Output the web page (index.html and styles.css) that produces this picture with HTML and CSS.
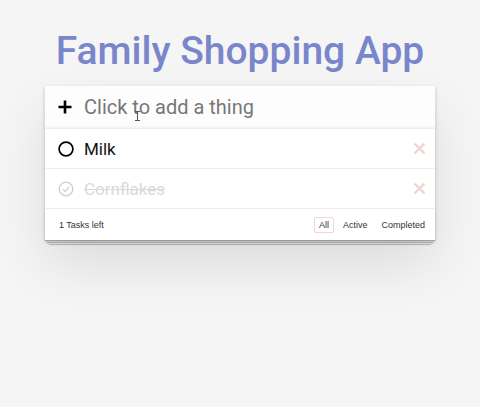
FILE: index.html
```html
<!DOCTYPE html>
<html>
<head>
<meta charset="utf-8">
<link rel="stylesheet" href="styles.css">
</head>
<body>
<h1 class="title">Family Shopping App</h1>
<section class="card">
  <div class="new-row">
    <svg class="plus" width="14" height="14" viewBox="0 0 14 14"><path d="M7 0.5V13.5M0.5 7H13.5" stroke="#000" stroke-width="2.6"/></svg>
    <span class="placeholder">Click to add a thing</span>
    <svg class="cursor" width="7" height="10" viewBox="0 0 7 10"><path d="M1 0.5H3.5M3.5 0.5H6M3.5 0.5V9.5M1 9.5H6" stroke="#555" stroke-width="1" fill="none"/></svg>
  </div>
  <ul class="list">
    <li class="item">
      <svg class="toggle" width="16" height="16" viewBox="0 0 16 16"><circle cx="8" cy="8" r="6.9" fill="none" stroke="#000" stroke-width="1.7"/></svg>
      <span class="label">Milk</span>
      <svg class="destroy" width="13" height="13" viewBox="0 0 13 13"><path d="M1.5 1.5L11.5 11.5M11.5 1.5L1.5 11.5" stroke="#efd3d3" stroke-width="2.4"/></svg>
    </li>
    <li class="item done">
      <svg class="toggle" width="16" height="16" viewBox="0 0 16 16"><circle cx="8" cy="8" r="6.8" fill="none" stroke="#cfcfcf" stroke-width="1.3"/><path d="M4.8 8.2L7.1 10.4L11.2 5.9" fill="none" stroke="#cfcfcf" stroke-width="1.3"/></svg>
      <span class="label">Cornflakes</span>
      <svg class="destroy" width="13" height="13" viewBox="0 0 13 13"><path d="M1.5 1.5L11.5 11.5M11.5 1.5L1.5 11.5" stroke="#efd3d3" stroke-width="2.4"/></svg>
    </li>
  </ul>
  <footer class="footer">
    <span class="count">1 Tasks left</span>
    <ul class="filters">
      <li><a class="filter selected">All</a></li>
      <li><a class="filter">Active</a></li>
      <li><a class="filter">Completed</a></li>
    </ul>
  </footer>
</section>
</body>
</html>
```
FILE: styles.css
```css
html, body {
  margin: 0;
  padding: 0;
}
body {
  background: #f5f5f5;
  font-family: Roboto, "Liberation Sans", sans-serif;
  width: 480px;
  height: 407px;
  overflow: hidden;
}
.title {
  margin: 28px 0 0;
  height: 58px;
  line-height: 46px;
  font-size: 39px;
  font-weight: 500;
  color: #7986cb;
  text-align: center;
}
.card {
  position: relative;
  width: 390px;
  margin: 0 auto;
  background: #fff;
  box-shadow: 0 2px 4px 0 rgba(0,0,0,0.2), 0 25px 50px 0 rgba(0,0,0,0.1);
}
.new-row {
  position: relative;
  display: flex;
  align-items: center;
  height: 42px;
  padding-left: 13px;
  background: rgba(0,0,0,0.006);
  box-shadow: inset 0 -2px 1px rgba(0,0,0,0.03);
  border-bottom: 1px solid #ededed;
}
.plus {
  flex: none;
  margin-right: 12px;
}
.placeholder {
  font-size: 20px;
  color: #777;
}
.cursor {
  position: absolute;
  left: 89px;
  top: 25px;
}
.list {
  list-style: none;
  margin: 0;
  padding: 0;
}
.item {
  display: flex;
  align-items: center;
  height: 39px;
  padding: 0 9px 0 13px;
  border-bottom: 1px solid #ededed;
}
.toggle {
  flex: none;
  margin-right: 10px;
}
.label {
  flex: 1;
  font-size: 17px;
  color: #111;
}
.done .label {
  color: #d9d9d9;
  text-decoration: line-through;
}
.destroy {
  flex: none;
}
.footer {
  position: relative;
  display: flex;
  align-items: center;
  justify-content: space-between;
  height: 31px;
  padding: 0 5px 0 14px;
  font-family: "Liberation Sans", Arial, sans-serif;
  font-size: 9px;
  color: #333;
}
.footer::before {
  content: "";
  position: absolute;
  left: 0;
  right: 0;
  bottom: 0;
  height: 31px;
  z-index: -1;
  box-shadow: 0 1px 1px rgba(0,0,0,0.2), 0 4px 0 -2px #f6f6f6, 0 5px 1px -2px rgba(0,0,0,0.2), 0 8px 0 -4px #f6f6f6, 0 9px 1px -4px rgba(0,0,0,0.2);
}
.filters {
  display: flex;
  list-style: none;
  margin: 0;
  padding: 0;
  gap: 4px;
}
.filter {
  display: block;
  padding: 2px 4px;
  border: 1px solid transparent;
  border-radius: 2px;
  color: #333;
}
.filter.selected {
  border-color: rgba(175,47,47,0.2);
}
```
